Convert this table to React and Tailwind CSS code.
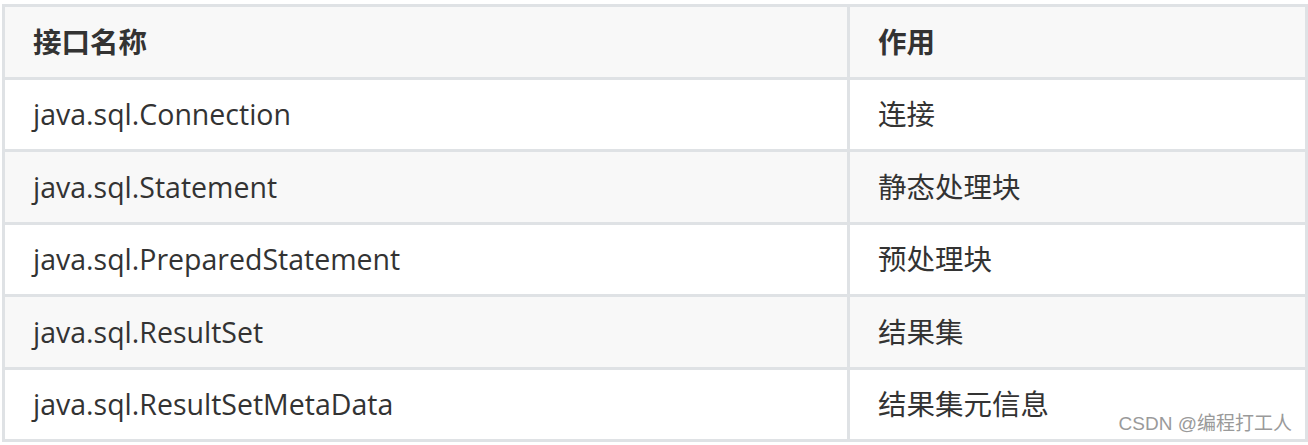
export default function App() {
  const rows = [
    ["java.sql.Connection", "连接"],
    ["java.sql.Statement", "静态处理块"],
    ["java.sql.PreparedStatement", "预处理块"],
    ["java.sql.ResultSet", "结果集"],
    ["java.sql.ResultSetMetaData", "结果集元信息"],
  ];
  // border-box heights: content + 3px bottom border (last row has none)
  const heights = ["h-[72px]", "h-[73px]", "h-[72px]", "h-[73px]", "h-[69px]"];

  return (
    <div className="w-[1308px] h-[445px] bg-white pt-[4px] pl-[2px] relative overflow-hidden">
      <div
        className="w-[1306px] border-[3px] border-[#dfe2e5] text-[#333333] text-[28.5px]"
        style={{ fontFamily: '"Open Sans", "Noto Sans CJK SC", sans-serif' }}
      >
        {/* header */}
        <div className="flex h-[73px] bg-[#f8f8f8] font-bold border-b-[3px] border-[#dfe2e5]">
          <div className="w-[845px] shrink-0 flex items-center pl-[28px] border-r-[3px] border-[#dfe2e5]">接口名称</div>
          <div className="flex-1 flex items-center pl-[28px]">作用</div>
        </div>
        {rows.map((r, i) => (
          <div
            key={i}
            className={`flex ${heights[i]} ${i % 2 === 1 ? "bg-[#f8f8f8]" : "bg-white"} ${
              i < rows.length - 1 ? "border-b-[3px] border-[#dfe2e5]" : ""
            }`}
          >
            <div className="w-[845px] shrink-0 flex items-center pl-[28px] border-r-[3px] border-[#dfe2e5]">{r[0]}</div>
            <div className="flex-1 flex items-center pl-[28px]">{r[1]}</div>
          </div>
        ))}
      </div>
      <div
        className="absolute right-[16px] bottom-[7px] text-[19px] text-[#9a9a9a]"
        style={{ fontFamily: '"Liberation Sans", "Noto Sans CJK SC", sans-serif' }}
      >
        CSDN @编程打工人
      </div>
    </div>
  );
}
